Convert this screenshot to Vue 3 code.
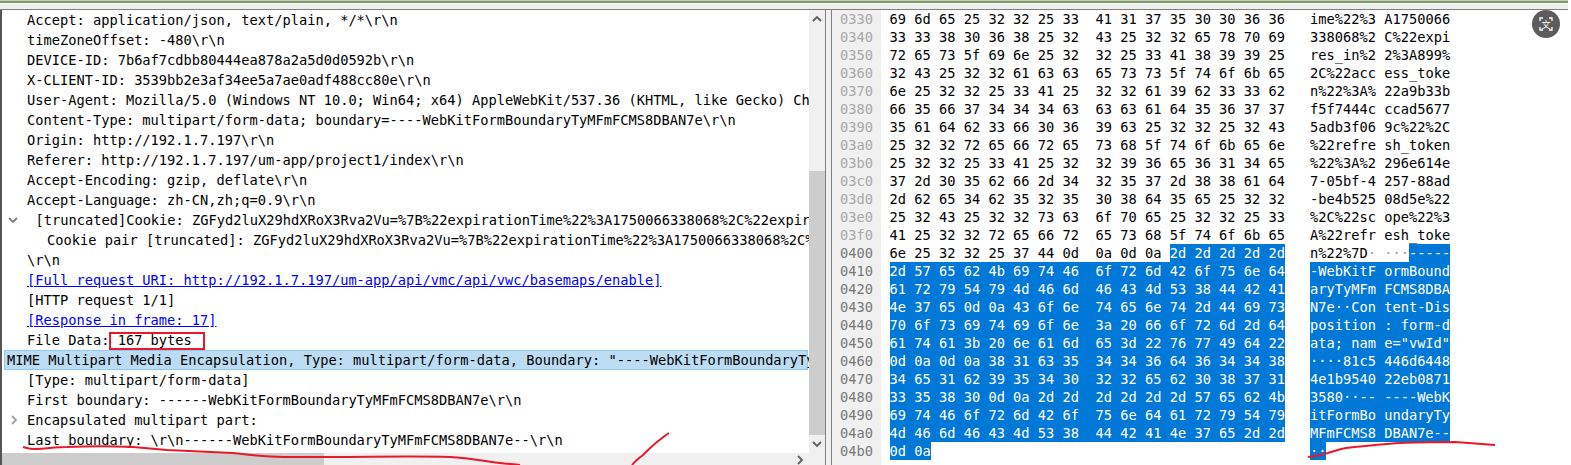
<script setup>
const boundary = 'WebKitFormBoundaryTyMFmFCMS8DBAN7e'
const treeRows = [
  { text: 'Accept: application/json, text/plain, */*\\r\\n' },
  { text: 'timeZoneOffset: -480\\r\\n' },
  { text: 'DEVICE-ID: 7b6af7cdbb80444ea878a2a5d0d0592b\\r\\n' },
  { text: 'X-CLIENT-ID: 3539bb2e3af34ee5a7ae0adf488cc80e\\r\\n' },
  { text: 'User-Agent: Mozilla/5.0 (Windows NT 10.0; Win64; x64) AppleWebKit/537.36 (KHTML, like Gecko) Ch' },
  { text: `Content-Type: multipart/form-data; boundary=----${boundary}\\r\\n` },
  { text: 'Origin: http://192.1.7.197\\r\\n' },
  { text: 'Referer: http://192.1.7.197/um-app/project1/index\\r\\n' },
  { text: 'Accept-Encoding: gzip, deflate\\r\\n' },
  { text: 'Accept-Language: zh-CN,zh;q=0.9\\r\\n' },
  { text: '[truncated]Cookie: ZGFyd2luX29hdXRoX3Rva2Vu=%7B%22expirationTime%22%3A1750066338068%2C%22expir', cls: 'lvl1', arrow: 'down' },
  { text: 'Cookie pair [truncated]: ZGFyd2luX29hdXRoX3Rva2Vu=%7B%22expirationTime%22%3A1750066338068%2C%', cls: 'lvl2' },
  { text: '\\r\\n' },
  { text: '[Full request URI: http://192.1.7.197/um-app/api/vmc/api/vwc/basemaps/enable]', link: true },
  { text: '[HTTP request 1/1]' },
  { text: '[Response in frame: 17]', link: true },
  { text: 'File Data: 167 bytes' },
  { text: 'MIME Multipart Media Encapsulation, Type: multipart/form-data, Boundary: "----WebKitFormBoundaryTy', cls: 'picked' },
  { text: '[Type: multipart/form-data]' },
  { text: `First boundary: ------${boundary}\\r\\n` },
  { text: 'Encapsulated multipart part:', arrow: 'right' },
  { text: `Last boundary: \\r\\n------${boundary}--\\r\\n` }
]

const bytes = [
  '696d652532322533413137353030363 6', '33333830363825324325323265787069',
  '7265735f696e25323225334138393925', '32432532326163636573735f746f6b65',
  '6e253232253341253232613962333362', '66356637343434636363616435363737',
  '35616462336630363963253232253243', '25323272656672657368 5f746f6b656e',
  '25323225334125323239366536313465', '372d303562662d343235372d38386164',
  '2d62653462353235303864356525 3232', '25324325323273636f70652532322533',
  '41253232726566726573685f746f6b65', '6e253232253744 0d0a0d0a2d2d2d2d2d',
  '2d5765624b6974466f726d426f756e64', '61727954794d466d46434d5338444241',
  '4e3765 0d0a436f6e74656e742d446973', '706f736974696f6e3a20666f726d2d64',
  '6174613b206e616d653d227677496422', '0d0a0d0a383163353434366436343438',
  '34653162393534303232656230383731', '333538300d0a2d2d2d2d2d2d5765624b',
  '69 74466f726d426f756e646172795479', '4d466d46434d53384442414e37652d2d',
  '0d0a'
].map((s) => s.replace(/\s/g, ''))

const base = 0x330
const selStart = 0x40b

const dumpRows = bytes.map((line, r) => {
  const pairs = line.match(/../g)
  const addr = base + r * 16
  const first = Math.max(0, selStart - addr)
  const hexOf = (list, from) =>
    list
      .map((b, i) => b + (i === list.length - 1 ? '' : from + i === 7 ? '  ' : ' '))
      .join('')
  const ascOf = (list, from) =>
    list
      .map((b, i) => {
        const c = parseInt(b, 16)
        const ch = c >= 32 && c < 127 ? String.fromCharCode(c) : '·'
        return ch + (from + i === 7 && i !== list.length - 1 ? ' ' : '')
      })
      .join('')
  const before = pairs.slice(0, first)
  const chosen = pairs.slice(first)
  const joinHex = before.length && chosen.length ? (first === 8 ? '  ' : ' ') : ''
  const joinAsc = before.length && chosen.length && first === 8 ? ' ' : ''
  return {
    offset: addr.toString(16).padStart(4, '0'),
    active: chosen.length > 0,
    hexPlain: hexOf(before, 0) + joinHex,
    hexSel: hexOf(chosen, first),
    ascPlain: ascOf(before, 0) + joinAsc,
    ascSel: ascOf(chosen, first)
  }
})
</script>

<template>
  <div class="window">
    <div class="titlebar"></div>
    <div class="panes">
      <section class="tree-pane">
        <div class="tree-body">
          <div class="tree">
            <div
              v-for="(row, i) in treeRows"
              :key="i"
              class="tree-row"
              :class="[row.cls, { link: row.link }]"
            >
              <svg v-if="row.arrow === 'down'" class="expander" width="12" height="12" viewBox="0 0 12 12">
                <path d="M2 4l4 4 4-4" />
              </svg>
              <svg v-if="row.arrow === 'right'" class="expander muted" width="12" height="12" viewBox="0 0 12 12">
                <path d="M5 2l4 4-4 4" />
              </svg>
              <span>{{ row.text }}</span>
            </div>
          </div>
          <div class="vbar">
            <svg class="bar-arrow" width="16" height="17" viewBox="0 0 16 17"><path d="M4 11l4-4 4 4" /></svg>
            <div class="vtrack"><div class="vthumb"></div></div>
            <svg class="bar-arrow" width="16" height="18" viewBox="0 0 16 18"><path d="M4 7l4 4 4-4" /></svg>
          </div>
        </div>
        <div class="hbar">
          <div class="hthumb"></div>
          <svg class="bar-arrow harrow" width="12" height="12" viewBox="0 0 12 12"><path d="M4 3l4 4-4 4" /></svg>
        </div>
      </section>
      <div class="splitter"></div>
      <section class="dump-pane">
        <div class="gutter">
          <div v-for="row in dumpRows" :key="row.offset" class="offset" :class="{ active: row.active }">{{ row.offset }}</div>
        </div>
        <div class="dump">
          <div v-for="row in dumpRows" :key="row.offset" class="dump-row">
            <div class="hex"><span>{{ row.hexPlain }}</span><span class="sel">{{ row.hexSel }}</span></div>
            <div class="ascii"><span v-for="(ch, i) in row.ascPlain" :key="i" :class="{ dim: ch === '·' }">{{ ch }}</span><span class="sel">{{ row.ascSel }}</span></div>
          </div>
        </div>
      </section>
    </div>

    <svg class="ink" width="1571" height="465" viewBox="0 0 1571 465">
      <rect x="110" y="333" width="94" height="16" />
      <path d="M23 447C27 448 30 449 35 449C45 449 55 447 67 447C90 446 110 446 133 447C145 448 155 449 167 450C190 451 212 452 233 453C250 455 266 457 283 457C300 457 316 457 333 457C370 457 410 456 450 457C468 458 484 461 500 463C507 464 514 464 520 465" />
      <path d="M669 433C664 436 661 439 657 442C652 446 648 450 643 455C639 458 635 461 632 465" />
      <path d="M1308 457C1315 456 1321 455 1328 453C1334 451 1340 449 1346 448C1364 446 1382 444 1400 443C1418 442 1437 442 1455 442C1468 443 1482 444 1495 445" />
    </svg>

    <div class="translate">
      <svg width="28" height="28" viewBox="0 0 28 28"><path d="M8 11V8h3M17 8h3v3M20 17v3h-3M11 20H8v-3" /></svg>
      <span>文</span>
    </div>
  </div>
</template>

<style scoped>
.window {
  position: relative;
  width: 1571px;
  height: 465px;
  display: flex;
  flex-direction: column;
  overflow: hidden;
  background: #fff;
  font-family: "DejaVu Sans Mono", "Liberation Mono", monospace;
  font-size: 13.69px;
  color: #000;
}
.titlebar {
  height: 10px;
  flex: none;
  margin-right: 3px;
  box-sizing: border-box;
  background: linear-gradient(to bottom, #c9c9c9 0 1px, #7f9d5f 1px 3px, #f7f7f7 3px 4px, #eeeeee 4px);
  border-bottom: 1px solid #808080;
}
.panes {
  flex: 1;
  display: flex;
  min-height: 0;
}
.tree-pane {
  width: 826px;
  flex: none;
  box-sizing: border-box;
  display: flex;
  flex-direction: column;
  border-left: 2px solid #555;
  border-right: 1px solid #808080;
  background: #f0f0f0;
}
.tree-body {
  flex: 1;
  display: flex;
  min-height: 0;
}
.tree {
  flex: 1;
  min-width: 0;
  background: #fff;
  overflow: hidden;
}
.tree-row {
  position: relative;
  height: 20px;
  line-height: 20px;
  padding-left: 25px;
  white-space: pre;
}
.tree-row.lvl1 {
  padding-left: 33.5px;
}
.tree-row.lvl2 {
  padding-left: 45px;
}
.tree-row.link {
  color: #0000ff;
  text-decoration: underline;
}
.tree-row.picked {
  box-sizing: border-box;
  margin: 0 1px 0 2px;
  padding-left: 2px;
  line-height: 18px;
  background: #bcdcf4;
  border: 1px solid #90c8f6;
}
.expander {
  position: absolute;
  left: 5px;
  top: 4px;
}
.expander path {
  fill: none;
  stroke: #808080;
  stroke-width: 1.8;
}
.expander.muted path {
  stroke: #a0a0a0;
}
.vbar {
  width: 16px;
  flex: none;
  display: flex;
  flex-direction: column;
  background: #f0f0f0;
}
.vtrack {
  flex: 1;
  padding-top: 144px;
}
.vthumb {
  height: 264px;
  background: #cdcdcd;
}
.bar-arrow {
  flex: none;
  display: block;
}
.bar-arrow path {
  fill: none;
  stroke: #606060;
  stroke-width: 1.8;
}
.hbar {
  height: 12px;
  flex: none;
  display: flex;
  background: #f0f0f0;
}
.hthumb {
  width: 322px;
  background: #cdcdcd;
}
.harrow {
  margin-left: 470px;
}
.splitter {
  width: 5px;
  flex: none;
  background: #f0f0f0;
}
.dump-pane {
  flex: 1;
  min-width: 0;
  display: flex;
  border-left: 1px solid #808080;
  background: #fff;
}
.gutter {
  width: 49px;
  flex: none;
  background: #f0f0f0;
}
.offset {
  height: 18px;
  line-height: 18px;
  padding-left: 8px;
  color: #a8a8a8;
}
.offset.active {
  color: #787878;
}
.dump {
  flex: 1;
  padding-left: 8.5px;
}
.dump-row {
  display: flex;
  height: 18px;
  line-height: 18px;
  white-space: pre;
}
.hex {
  width: 420.5px;
  flex: none;
}
.dim {
  color: #a0a0a0;
}
.sel {
  display: inline-block;
  background: #0078d7;
  color: #fff;
}
.translate {
  position: absolute;
  left: 1532px;
  top: 10px;
  width: 28px;
  height: 28px;
  border-radius: 50%;
  background: #5c5c5c;
  color: #fff;
  display: flex;
  align-items: center;
  justify-content: center;
}
.translate svg {
  position: absolute;
  inset: 0;
}
.translate path {
  fill: none;
  stroke: #fff;
  stroke-width: 1.3;
}
.translate span {
  font-family: "Noto Sans CJK SC", sans-serif;
  font-size: 9px;
  line-height: 1;
}
.ink {
  position: absolute;
  left: 0;
  top: 0;
  pointer-events: none;
}
.ink rect,
.ink path {
  fill: none;
  stroke: #e8192c;
  stroke-width: 2;
}
</style>

<style>
html,
body {
  margin: 0;
  overflow: hidden;
  background: #fff;
}
</style>
